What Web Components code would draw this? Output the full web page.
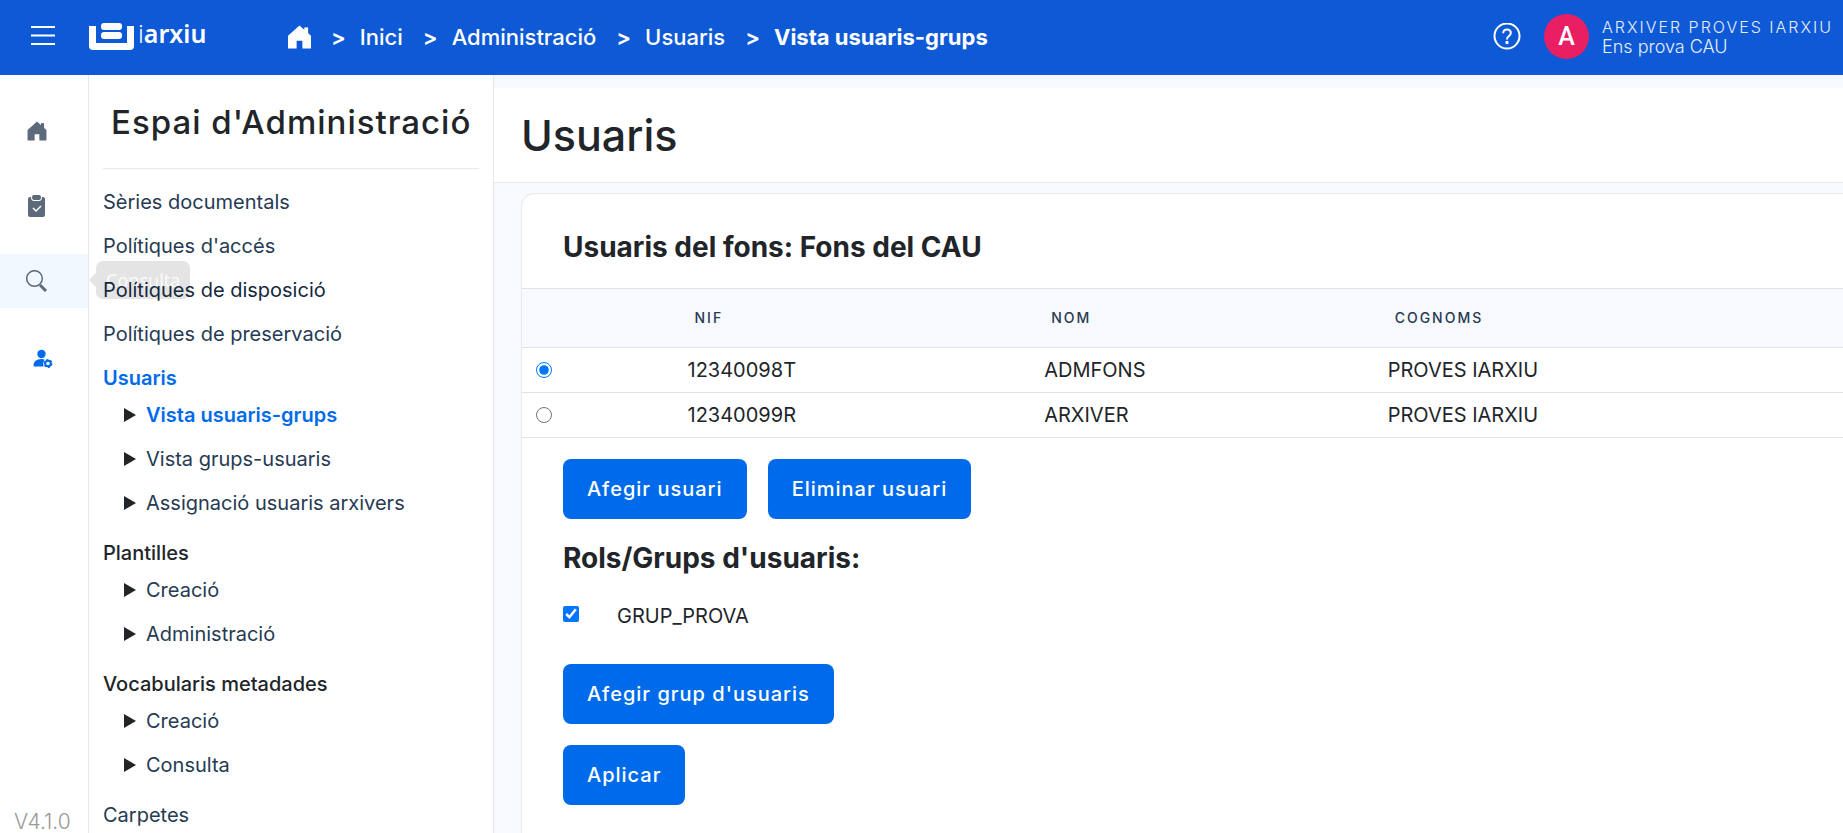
<!DOCTYPE html>
<html lang="ca">
<head>
<meta charset="utf-8">
<meta name="viewport" content="width=device-width, initial-scale=1">
<title>iArxiu - Vista usuaris-grups</title>
<style>
  :root {
    --header: #0e5ad6;
    --primary: #006bea;
    --ink: #212529;
    --link: #263a53;
    --muted: #5d6a7b;
    --line: #e6e8eb;
    --wash: #f8f9fd;
  }
  body {
    margin: 0;
    background: #fff;
    color: var(--ink);
    font-family: Inter, "Noto Sans", sans-serif;
    font-size: 20px;
    line-height: 24px;
  }
</style>
</head>
<body>
<app-shell>
  <app-header slot="header">
    <crumb-trail>
      <crumb-item href="#inici">Inici</crumb-item>
      <crumb-item href="#administracio">Administració</crumb-item>
      <crumb-item href="#usuaris">Usuaris</crumb-item>
      <crumb-item href="#vista" current>Vista usuaris-grups</crumb-item>
    </crumb-trail>
    <user-badge slot="user" initial="A">
      <span slot="name">ARXIVER PROVES IARXIU</span>
      <span slot="org">Ens prova CAU</span>
    </user-badge>
  </app-header>
  <nav-rail slot="rail" version="V4.1.0"></nav-rail>
  <side-menu slot="menu" heading="Espai d'Administració">
    <menu-link>Sèries documentals</menu-link>
    <menu-link>Polítiques d'accés</menu-link>
    <menu-link hovered>Polítiques de disposició</menu-link>
    <menu-link>Polítiques de preservació</menu-link>
    <menu-group label="Usuaris" active>
      <menu-link nested active>Vista usuaris-grups</menu-link>
      <menu-link nested>Vista grups-usuaris</menu-link>
      <menu-link nested>Assignació usuaris arxivers</menu-link>
    </menu-group>
    <menu-group label="Plantilles">
      <menu-link nested>Creació</menu-link>
      <menu-link nested>Administració</menu-link>
    </menu-group>
    <menu-group label="Vocabularis metadades">
      <menu-link nested>Creació</menu-link>
      <menu-link nested>Consulta</menu-link>
    </menu-group>
    <menu-link>Carpetes</menu-link>
  </side-menu>
  <page-title>Usuaris</page-title>
  <content-card>
    <span slot="heading">Usuaris del fons: Fons del CAU</span>
    <users-table slot="table"></users-table>
    <button-row>
      <primary-button>Afegir usuari</primary-button>
      <primary-button>Eliminar usuari</primary-button>
    </button-row>
    <group-list heading="Rols/Grups d'usuaris:">GRUP_PROVA</group-list>
    <button-row>
      <primary-button>Afegir grup d'usuaris</primary-button>
    </button-row>
    <button-row>
      <primary-button>Aplicar</primary-button>
    </button-row>
  </content-card>
</app-shell>

<script>
const define = (name, render) => {
  customElements.define(name, class extends HTMLElement {
    constructor() {
      super();
      this.attachShadow({ mode: "open" });
    }
    connectedCallback() {
      const template = document.createElement("template");
      template.innerHTML = render(this);
      this.shadowRoot.replaceChildren(template.content.cloneNode(true));
    }
  });
};

const house = `<path d="M12 0 24 10.6V24h-9v-8H9v8H0V10.6z"/><path d="M17 2h4v8h-4z"/>`;

define("app-shell", () => `
  <style>
    :host { display: grid; height: 100vh; overflow: hidden;
      grid-template: 75px minmax(0, 1fr) / 89px 404px minmax(0, 1fr); }
    .header { grid-column: 1 / -1; }
    .rail, .menu { min-height: 0; display: grid; }
    .rail { border-right: 1px solid var(--line); }
    .menu { z-index: 2; }
    main { background: var(--wash); border-left: 1px solid var(--line); padding-top: 13px; overflow: hidden; display: flex; flex-direction: column; }
  </style>
  <div class="header"><slot name="header"></slot></div>
  <div class="rail"><slot name="rail"></slot></div>
  <div class="menu"><slot name="menu"></slot></div>
  <main><slot></slot></main>`);

define("app-header", () => `
  <style>
    :host { display: flex; align-items: center; height: 75px; box-sizing: border-box;
      padding: 0 10px 2px 31px; background: var(--header); color: #fff; }
    button, a { all: unset; display: flex; cursor: pointer; }
    svg { display: block; }
    .logo { margin-left: 34px; gap: 4px; align-items: center; width: 199px; font: 600 25px/28px "Noto Sans", sans-serif; padding-bottom: 8px; }
    .logo svg { margin-top: 8px; }
    .thin { font-weight: 300; }
    .help { margin-left: auto; margin-right: 23px; }
  </style>
  <button aria-label="Menú"><svg width="24" height="30" stroke="#fff" stroke-width="2"><path d="M0 5h24M0 13.500h24M0 22h24"/></svg></button>
  <a class="logo" href="#inici" aria-label="iarxiu">
    <svg width="45" height="27" fill="#fff"><path d="M0 3h7v17h31V3h7v20q0 4-4 4H4q-4 0-4-4z"/><rect x="12" width="21" height="7" rx="3"/><rect x="12" y="9" width="21" height="7" rx="3"/></svg>
    <span><span class="thin">i</span>arxiu</span>
  </a>
  <slot></slot>
  <button class="help" aria-label="Ajuda"><svg width="28" height="28" fill="none" stroke="#fff" stroke-width="2"><circle cx="14" cy="13" r="12.500"/><path d="M10.200 10.200q0-3.700 3.800-3.700t3.800 3.500q0 2-2 3.200-1.800 1-1.800 3.200"/><circle cx="14" cy="19.500" r=".7"/></svg></button>
  <slot name="user"></slot>`);

define("crumb-trail", () => `
  <style>
    :host { display: block; }
    nav { display: flex; align-items: center; }
    a { display: flex; }
  </style>
  <nav aria-label="Ruta"><a href="#home" aria-label="Inici"><svg width="23" height="24" viewBox="0 0 24 24" fill="#fff">${house}</svg></a><slot></slot></nav>`);

define("crumb-item", el => `
  <style>
    :host { display: flex; font-size: 22px; line-height: 24px; font-weight: 600; }
    .sep { margin: 0 14px 0 20px; }
    a { color: #fff; text-decoration: none; white-space: nowrap; font-weight: ${el.hasAttribute("current") ? 700 : 500}; }
  </style>
  <span class="sep">&gt;</span><a href="${el.getAttribute("href")}"><slot></slot></a>`);

define("user-badge", el => `
  <style>
    :host { display: flex; align-items: center; gap: 13px; }
    .avatar { width: 45px; height: 45px; border-radius: 50%; background: #e91e63; display: grid; place-items: center; font: 500 25px/28px Roboto, sans-serif; }
    .text { font-weight: 300; line-height: 20px; opacity: .9; white-space: nowrap; }
    .name { font-size: 16px; letter-spacing: 2px; }
    .org { font-size: 18px; }
  </style>
  <span class="avatar">${el.getAttribute("initial")}</span>
  <div class="text"><div class="name"><slot name="name"></slot></div><div class="org"><slot name="org"></slot></div></div>`);

define("nav-rail", el => `
  <style>
    :host { display: flex; flex-direction: column; justify-content: space-between; padding-top: 29px; min-height: 0; }
    nav { display: grid; gap: 21px; }
    a { position: relative; display: flex; align-items: center; height: 54px; padding-left: 26px; color: var(--muted); text-decoration: none; }
    svg { display: block; fill: currentColor; }
    .hover { background: #f1f8ff; }
    .active { color: var(--primary); padding-left: 33px; height: 60px; }
    .tip { position: absolute; left: 96px; top: 7px; padding: 0 10px; border-radius: 7px; background: #e4e4e4; color: #fafafa; font: 18px/38px "Noto Sans", sans-serif; }
    .tip::before { content: ""; position: absolute; left: -7px; top: 12px; border: 7px solid transparent; border-left: 0; border-right-color: #e4e4e4; }
    .version { padding-left: 14px; font-size: 21px; line-height: 22px; font-weight: 300; color: #999; }
  </style>
  <nav aria-label="Principal">
    <a href="#inici" aria-label="Inici"><svg width="22" height="20" viewBox="-2 0 28 24">${house}</svg></a>
    <a href="#tasques" aria-label="Tasques"><svg width="22" height="22"><path d="M4 2h1q0 4 3 4h5q3 0 3-4h1q2 0 2 2v16q0 2-2 2H4q-2 0-2-2V4q0-2 2-2z"/><path d="M8 0h5q2 0 2 2 0 3-2 3H8Q6 5 6 2q0-2 2-2z"/><path d="M7 13l3 3 5-5" fill="none" stroke="#fff" stroke-width="1.500"/></svg></a>
    <a class="hover" href="#consulta" aria-label="Consulta"><svg width="22" height="22"><circle cx="8.500" cy="8.500" r="7.800" fill="none" stroke="currentColor" stroke-width="1.500"/><path d="M14 15l6 6" stroke="currentColor" stroke-width="3"/></svg><span class="tip">Consulta</span></a>
    <a class="active" href="#admin" aria-label="Administració"><svg width="20" height="20"><circle cx="8.500" cy="5" r="4.200"/><path d="M.5 17q0-7 8-7 2 0 3 .5-2 3-1 7H2q-1.500 0-1.500-.5z"/><circle cx="15" cy="14.500" r="2.800" fill="none" stroke="currentColor" stroke-width="2"/><circle cx="15" cy="14.500" r="3.900" fill="none" stroke="currentColor" stroke-width="1.200" stroke-dasharray="2 2.080"/></svg></a>
  </nav>
  <span class="version">${el.getAttribute("version")}</span>`);

define("side-menu", el => `
  <style>
    :host { display: block; padding: 29px 14px 0; overflow: hidden; min-height: 0; }
    h2 { margin: 0 0 11px; padding: 0 0 28px 8px; line-height: 36px; font-size: 33px; font-weight: 500; letter-spacing: 1px; white-space: nowrap; border-bottom: 1px solid var(--line); }
  </style>
  <h2>${el.getAttribute("heading")}</h2>
  <nav><slot></slot></nav>`);

define("menu-link", el => `
  <style>
    :host { display: flex; align-items: center; height: 44px; }
    :host([nested]) { padding-left: 21px; }
    svg { margin-right: 10px; fill: var(--ink); }
    a { color: var(--link); text-decoration: none; white-space: nowrap; }
    :host([hovered]) a { color: #16283d; }
    :host([active]) a { color: var(--primary); font-weight: 600; }
  </style>
  ${el.hasAttribute("nested") ? `<svg width="12" height="14"><path d="M0 0l12 7-12 7z"/></svg>` : ""}<a href="#"><slot></slot></a>`);

define("menu-group", el => `
  <style>
    :host { display: block; padding-bottom: 6px; }
    h3 { margin: 0; padding-top: 7px; line-height: 30px; font-size: 20px; font-weight: 500; }
    :host([active]) h3 { color: var(--primary); font-weight: 600; }
  </style>
  <h3>${el.getAttribute("label")}</h3><slot></slot>`);

define("page-title", () => `
  <style>
    :host { display: block; background: #fff; border-bottom: 1px solid var(--line); padding: 23px 27px; }
    h1 { margin: 0; font-size: 43px; line-height: 48px; font-weight: 500; }
  </style>
  <h1><slot></slot></h1>`);

define("content-card", () => `
  <style>
    :host { display: block; flex: 1; margin: 10px 0 0 27px; background: #fff; border: 1px solid var(--line); border-width: 1px 0 0 1px; border-radius: 14px 0 0 0; }
    h2 { margin: 0; padding: 37px 41px 25px; line-height: 32px; font-size: 28px; font-weight: 700; }
    .body { padding: 21px 41px; display: grid; gap: 21px; }
  </style>
  <h2><slot name="heading"></slot></h2>
  <slot name="table"></slot>
  <div class="body"><slot></slot></div>`);

const users = [
  ["12340098T", "ADMFONS", "PROVES IARXIU"],
  ["12340099R", "ARXIVER", "PROVES IARXIU"],
];

define("users-table", () => `
  <style>
    :host { display: block; }
    table { width: 100%; border-collapse: collapse; table-layout: fixed; }
    th, td { text-align: left; padding: 0 7px; border-bottom: 1px solid #dfe2e6; height: 44px; }
    th { height: 58px; padding: 0 14px; background: var(--wash); border-top: 1px solid #dfe2e6; color: var(--link); font-size: 14px; font-weight: 500; letter-spacing: 2px; }
    .pick { width: 12%; }
    .nif { width: 27%; }
    .nom { width: 26%; }
    td:first-child { padding: 0 14px; }
    input { display: block; width: 16px; height: 16px; margin: 0; accent-color: #0075ff; }
  </style>
  <table>
    <colgroup><col class="pick"><col class="nif"><col class="nom"><col></colgroup>
    <thead><tr><th></th><th>NIF</th><th>NOM</th><th>COGNOMS</th></tr></thead>
    <tbody>${users.map((u, i) => `<tr><td><input type="radio" name="user" aria-label="${u[0]}"${i ? "" : " checked"}></td>${u.map(v => `<td>${v}</td>`).join("")}</tr>`).join("")}</tbody>
  </table>`);

define("button-row", () => `
  <style>:host { display: flex; gap: 21px; }</style>
  <slot></slot>`);

define("primary-button", () => `
  <style>
    :host { display: block; }
    button { height: 60px; padding: 0 24px; border: 0; border-radius: 8px; background: var(--primary); color: #fff; font: inherit; font-weight: 500; letter-spacing: 1px; white-space: nowrap; }
  </style>
  <button type="button"><slot></slot></button>`);

define("group-list", el => `
  <style>
    :host { display: block; padding-bottom: 14px; }
    h2 { margin: 0 0 27px; line-height: 36px; font-size: 28px; font-weight: 700; }
    label { display: flex; align-items: flex-start; gap: 38px; line-height: 26px; }
    input { width: 16px; height: 16px; margin: 3px 0 0; accent-color: #0075ff; }
  </style>
  <h2>${el.getAttribute("heading")}</h2>
  <label><input type="checkbox" checked><span><slot></slot></span></label>`);
</script>
</body>
</html>
